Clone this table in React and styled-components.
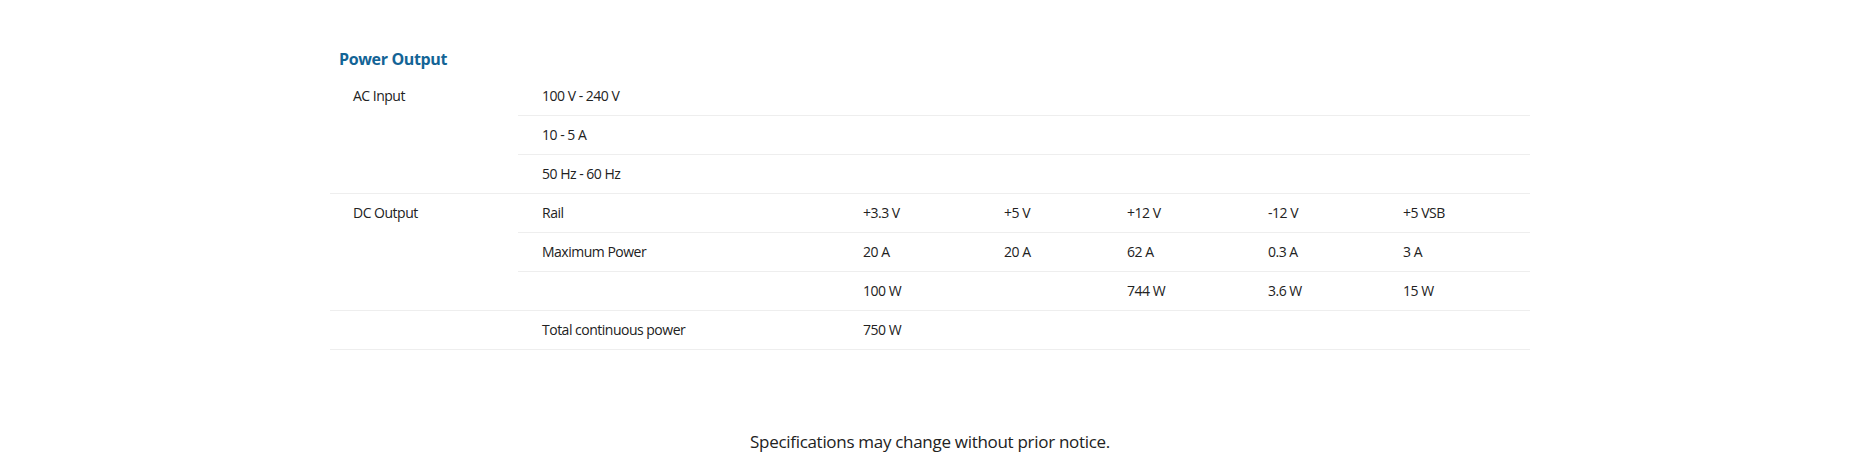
import React from 'react'
import styled, { createGlobalStyle } from 'styled-components'

const GlobalStyle = createGlobalStyle`
    body {
        margin: 0;
        background: #fff;
        font-family: "Open Sans", "Noto Sans", sans-serif;
        color: #222;
    }
`

const rails = ['+3.3 V', '+5 V', '+12 V', '-12 V', '+5 VSB']

const groups = [
    {
        label: 'AC Input',
        rows: [['100 V - 240 V'], ['10 - 5 A'], ['50 Hz - 60 Hz']],
        span: true,
    },
    {
        label: 'DC Output',
        rows: [
            ['Rail', ...rails],
            ['Maximum Power', '20 A', '20 A', '62 A', '0.3 A', '3 A'],
            ['', '100 W', '', '744 W', '3.6 W', '15 W'],
        ],
    },
    {
        label: '',
        rows: [['Total continuous power', '750 W', '', '', '', '']],
    },
]

function App() {
    return (
        <>
            <GlobalStyle />
            <Page>
                <Container>
                    <Title>Power Output</Title>
                    <SpecTable>
                        {groups.map((g, gi) => (
                            <Group key={gi}>
                                <Label>{g.label}</Label>
                                <Rows>
                                    {g.rows.map((r, ri) => (
                                        <Row key={ri}>
                                            {g.span ? (
                                                <Cell $wide>{r[0]}</Cell>
                                            ) : (
                                                r.map((v, ci) => <Cell key={ci}>{v}</Cell>)
                                            )}
                                        </Row>
                                    ))}
                                </Rows>
                            </Group>
                        ))}
                    </SpecTable>
                </Container>
                <Notice>Specifications may change without prior notice.</Notice>
            </Page>
        </>
    )
}

export default App

const Page = styled.div`
    width: 1860px;
    height: 469px;
    padding-top: 47px;
    box-sizing: border-box;
`

const Container = styled.div`
    width: 1200px;
    margin: 0 auto;
`

const Title = styled.h3`
    margin: 0 0 6px;
    padding-left: 9px;
    font-size: 16px;
    line-height: 24px;
    font-weight: 700;
    color: #136496;
    letter-spacing: -0.35px;
`

const SpecTable = styled.div`
    width: 1200px;
    font-size: 14px;
    letter-spacing: -0.5px;
    color: #222;
`

const Group = styled.div`
    display: grid;
    grid-template-columns: 188px 1fr;
    border-bottom: 1px solid #eeeeee;
`

const Label = styled.div`
    padding-left: 23px;
    line-height: 38px;
    white-space: nowrap;
`

const Rows = styled.div`
    display: flex;
    flex-direction: column;
`

const Row = styled.div`
    display: grid;
    grid-template-columns: 321px 141px 123px 141px 135px 151px;
    height: 38px;
    align-items: center;

    & + & {
        border-top: 1px solid #eeeeee;
    }
`

const Cell = styled.div`
    grid-column: ${({ $wide }) => ($wide ? '1 / -1' : 'auto')};
    padding-left: 24px;
    line-height: 20px;
    white-space: nowrap;
`

const Notice = styled.p`
    margin: 80px 0 0;
    text-align: center;
    font-size: 17px;
    line-height: 24px;
    color: #222;
    letter-spacing: -0.3px;
`
